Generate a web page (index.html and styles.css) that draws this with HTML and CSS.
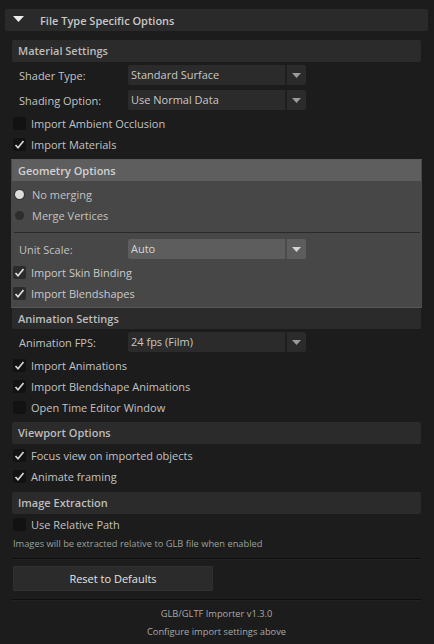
FILE: index.html
```html
<!DOCTYPE html>
<html>
<head>
<meta charset="utf-8">
<link rel="stylesheet" href="styles.css">
</head>
<body>
<div class="frame-head">
  <svg class="tri" width="12" height="7" viewBox="0 0 12 7"><polygon points="0,0 11,0 5.5,6" fill="#ececec"/></svg>
  <span class="frame-title">File Type Specific Options</span>
</div>
<div class="frame-body">
  <div class="sec-head">Material Settings</div>
  <div class="fields first">
    <div class="field"><span class="flabel">Shader Type:</span><div class="combo"><span class="cval">Standard Surface</span><span class="carrow"><svg width="9" height="5" viewBox="0 0 9 5"><polygon points="0,0 9,0 4.5,5" fill="#9a9a9a"/></svg></span></div></div>
    <div class="field"><span class="flabel">Shading Option:</span><div class="combo"><span class="cval">Use Normal Data</span><span class="carrow"><svg width="9" height="5" viewBox="0 0 9 5"><polygon points="0,0 9,0 4.5,5" fill="#9a9a9a"/></svg></span></div></div>
  </div>
  <div class="checks">
    <div class="check"><span class="box"></span><span>Import Ambient Occlusion</span></div>
    <div class="check"><span class="box"><svg width="13" height="13" viewBox="0 0 13 13"><polyline points="2.5,7 5,9.8 10.5,3" fill="none" stroke="#d6d6d6" stroke-width="1.7"/></svg></span><span>Import Materials</span></div>
  </div>

  <div class="geo">
    <div class="geo-head">Geometry Options</div>
    <div class="radios">
      <div class="radio"><span class="dot on"></span><span>No merging</span></div>
      <div class="radio"><span class="dot"></span><span>Merge Vertices</span></div>
    </div>
    <div class="geo-sep"></div>
    <div class="field geo-field"><span class="flabel">Unit Scale:</span><div class="combo light"><span class="cval">Auto</span><span class="carrow"><svg width="9" height="5" viewBox="0 0 9 5"><polygon points="0,0 9,0 4.5,5" fill="#d4d4d4"/></svg></span></div></div>
    <div class="checks">
      <div class="check"><span class="box mid"><svg width="13" height="13" viewBox="0 0 13 13"><polyline points="2.5,7 5,9.8 10.5,3" fill="none" stroke="#e0e0e0" stroke-width="1.7"/></svg></span><span>Import Skin Binding</span></div>
      <div class="check"><span class="box mid"><svg width="13" height="13" viewBox="0 0 13 13"><polyline points="2.5,7 5,9.8 10.5,3" fill="none" stroke="#e0e0e0" stroke-width="1.7"/></svg></span><span>Import Blendshapes</span></div>
    </div>
  </div>

  <div class="sec-head anim">Animation Settings</div>
  <div class="fields anim-fields">
    <div class="field"><span class="flabel">Animation FPS:</span><div class="combo"><span class="cval">24 fps (Film)</span><span class="carrow"><svg width="9" height="5" viewBox="0 0 9 5"><polygon points="0,0 9,0 4.5,5" fill="#9a9a9a"/></svg></span></div></div>
  </div>
  <div class="checks">
    <div class="check"><span class="box"><svg width="13" height="13" viewBox="0 0 13 13"><polyline points="2.5,7 5,9.8 10.5,3" fill="none" stroke="#d6d6d6" stroke-width="1.7"/></svg></span><span>Import Animations</span></div>
    <div class="check"><span class="box"><svg width="13" height="13" viewBox="0 0 13 13"><polyline points="2.5,7 5,9.8 10.5,3" fill="none" stroke="#d6d6d6" stroke-width="1.7"/></svg></span><span>Import Blendshape Animations</span></div>
    <div class="check"><span class="box"></span><span>Open Time Editor Window</span></div>
  </div>

  <div class="sec-head viewport">Viewport Options</div>
  <div class="checks tight">
    <div class="check"><span class="box"><svg width="13" height="13" viewBox="0 0 13 13"><polyline points="2.5,7 5,9.8 10.5,3" fill="none" stroke="#d6d6d6" stroke-width="1.7"/></svg></span><span>Focus view on imported objects</span></div>
    <div class="check"><span class="box"><svg width="13" height="13" viewBox="0 0 13 13"><polyline points="2.5,7 5,9.8 10.5,3" fill="none" stroke="#d6d6d6" stroke-width="1.7"/></svg></span><span>Animate framing</span></div>
  </div>

  <div class="sec-head image">Image Extraction</div>
  <div class="checks none">
    <div class="check"><span class="box"></span><span>Use Relative Path</span></div>
  </div>
  <div class="hint">Images will be extracted relative to GLB file when enabled</div>
  <div class="sep"></div>
  <button class="btn">Reset to Defaults</button>
  <div class="sep sep2"></div>
  <div class="foot">GLB/GLTF Importer v1.3.0</div>
  <div class="foot">Configure import settings above</div>
</div>
</body>
</html>
```
FILE: styles.css
```css
html, body {
  margin: 0;
  padding: 0;
  background: #1c1c1c;
}
body {
  font-family: "Open Sans", "Noto Sans", sans-serif;
  font-size: 11px;
  color: #c2c2c2;
  padding-top: 9px;
}
.frame-head {
  margin: 0 6px 0 5px;
  height: 22px;
  background: #2a2a2a;
  border-radius: 2px;
  display: flex;
  align-items: center;
}
.tri {
  margin-left: 8px;
  margin-top: -2px;
  flex: none;
}
.frame-title {
  margin-left: 15px;
  font-weight: 600;
  color: #c8c8c8;
  font-size: 11px;
}
.frame-body {
  padding: 9px 13px 0 12px;
}
.sec-head {
  height: 22px;
  line-height: 22px;
  background: #2b2b2b;
  border-radius: 2px;
  padding-left: 6px;
  font-weight: 600;
  color: #bdbdbd;
}
.fields {
  display: flex;
  flex-direction: column;
  gap: 5px;
  margin-top: 3px;
}
.field {
  display: flex;
  align-items: center;
  height: 20px;
}
.flabel {
  width: 116px;
  padding-left: 7px;
  box-sizing: border-box;
  flex: none;
}
.combo {
  width: 178px;
  height: 20px;
  display: flex;
  border-radius: 2px;
  overflow: hidden;
  background: #1f1f1f;
  gap: 2px;
}
.cval {
  flex: 1;
  background: #2b2b2b;
  padding-left: 3px;
  line-height: 20px;
  color: #c8c8c8;
}
.carrow {
  width: 19px;
  background: #2b2b2b;
  display: flex;
  align-items: center;
  justify-content: center;
}
.combo.light { background: #4a4a4a; }
.combo.light .cval, .combo.light .carrow { background: #5d5d5d; color: #d4d4d4; }
.checks {
  margin-top: 3px;
  display: flex;
  flex-direction: column;
}
.check {
  height: 21px;
  display: flex;
  align-items: center;
}
.box {
  width: 13px;
  height: 13px;
  border-radius: 2px;
  background: #121212;
  margin-left: 1px;
  margin-right: 5px;
  flex: none;
  display: flex;
}
.box.mid { background: #2b2b2b; }
.geo {
  margin: 4px -1px 0 -1px;
  padding: 0 1px 3px 1px;
  background: #474747;
  border-top: 1px solid #5a5a5a;
  border-bottom: 1px solid #575757;
}
.geo-head {
  height: 21px;
  line-height: 21px;
  background: #5e5e5e;
  padding-left: 6px;
  font-weight: 600;
  color: #d2d2d2;
}
.radios {
  margin-top: 3px;
}
.radio {
  height: 21px;
  display: flex;
  align-items: center;
}
.dot {
  width: 9px;
  height: 9px;
  border-radius: 50%;
  background: #2d2d2d;
  margin-left: 3px;
  margin-right: 8px;
  margin-top: -1px;
  flex: none;
}
.dot.on {
  background: #dcdcdc;
  box-shadow: 0 0 0 1px #333;
}
.geo-sep {
  height: 1px;
  background: #2a2a2a;
  margin: 6px 1px 0 2px;
}
.geo-field {
  margin-top: 6px;
}
.geo .checks { color: #cacaca; }
.sec-head.anim {
  height: 21px;
  line-height: 21px;
  margin-top: 0;
}
.anim-fields { margin-top: 3px; }
.sec-head.viewport { margin-top: 4px; }
.checks.tight { margin-top: 1px; }
.sec-head.image { margin-top: 5px; }
.checks.none { margin-top: 0; }
.hint {
  margin-top: 2px;
  font-size: 9.3px;
  line-height: 14px;
  color: #9aa29c;
  padding-left: 1px;
}
.sep {
  margin-top: 7px;
  height: 1px;
  background: #0e0e0e;
  border-bottom: 1px solid #222;
}
.btn {
  display: block;
  margin: 6px 0 0 1px;
  width: 200px;
  height: 25px;
  background: #2b2b2b;
  border: 1px solid #303030;
  border-radius: 1px;
  color: #e4e4e4;
  font-family: inherit;
  font-size: 11px;
  padding: 0;
}
.sep2 { margin-top: 8px; }
.foot {
  text-align: center;
  height: 18px;
  line-height: 18px;
  font-size: 9.3px;
  color: #a8a8a8;
}
.sep2 + .foot { margin-top: 4px; }
```
